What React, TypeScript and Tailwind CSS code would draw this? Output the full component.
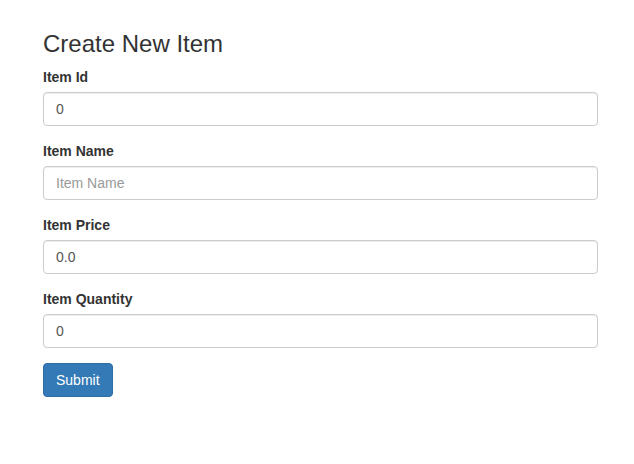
import { useState } from "react";

const fields = [
  { label: "Item Id", value: "0", placeholder: "" },
  { label: "Item Name", value: "", placeholder: "Item Name" },
  { label: "Item Price", value: "0.0", placeholder: "" },
  { label: "Item Quantity", value: "0", placeholder: "" },
];

export default function App() {
  const [values, setValues] = useState(fields.map((f) => f.value));

  return (
    <div className="min-h-screen bg-white font-['Liberation_Sans',Arial,sans-serif] text-[14px] leading-[20px] text-[#333]">
      <div className="ml-[43px] w-[555px] pt-[31px]">
        <h3 className="mb-[10px] text-[24px] leading-[26.4px] font-normal">Create New Item</h3>
        <form onSubmit={(e) => e.preventDefault()}>
          {fields.map((f, i) => (
            <div key={f.label} className="mb-[15px]">
              <label className="mb-[5px] block font-bold">{f.label}</label>
              <input
                type="text"
                value={values[i]}
                placeholder={f.placeholder}
                onChange={(e) => {
                  const next = [...values];
                  next[i] = e.target.value;
                  setValues(next);
                }}
                className="block h-[34px] w-full rounded-[4px] border border-[#ccc] bg-white px-[12px] py-[6px] text-[14px] text-[#555] shadow-[inset_0_1px_1px_rgba(0,0,0,0.075)] outline-none placeholder:text-[#999]"
              />
            </div>
          ))}
          <button
            type="submit"
            className="h-[34px] rounded-[4px] border border-[#2e6da4] bg-[#337ab7] px-[12px] text-[14px] text-white"
          >
            Submit
          </button>
        </form>
      </div>
    </div>
  );
}
